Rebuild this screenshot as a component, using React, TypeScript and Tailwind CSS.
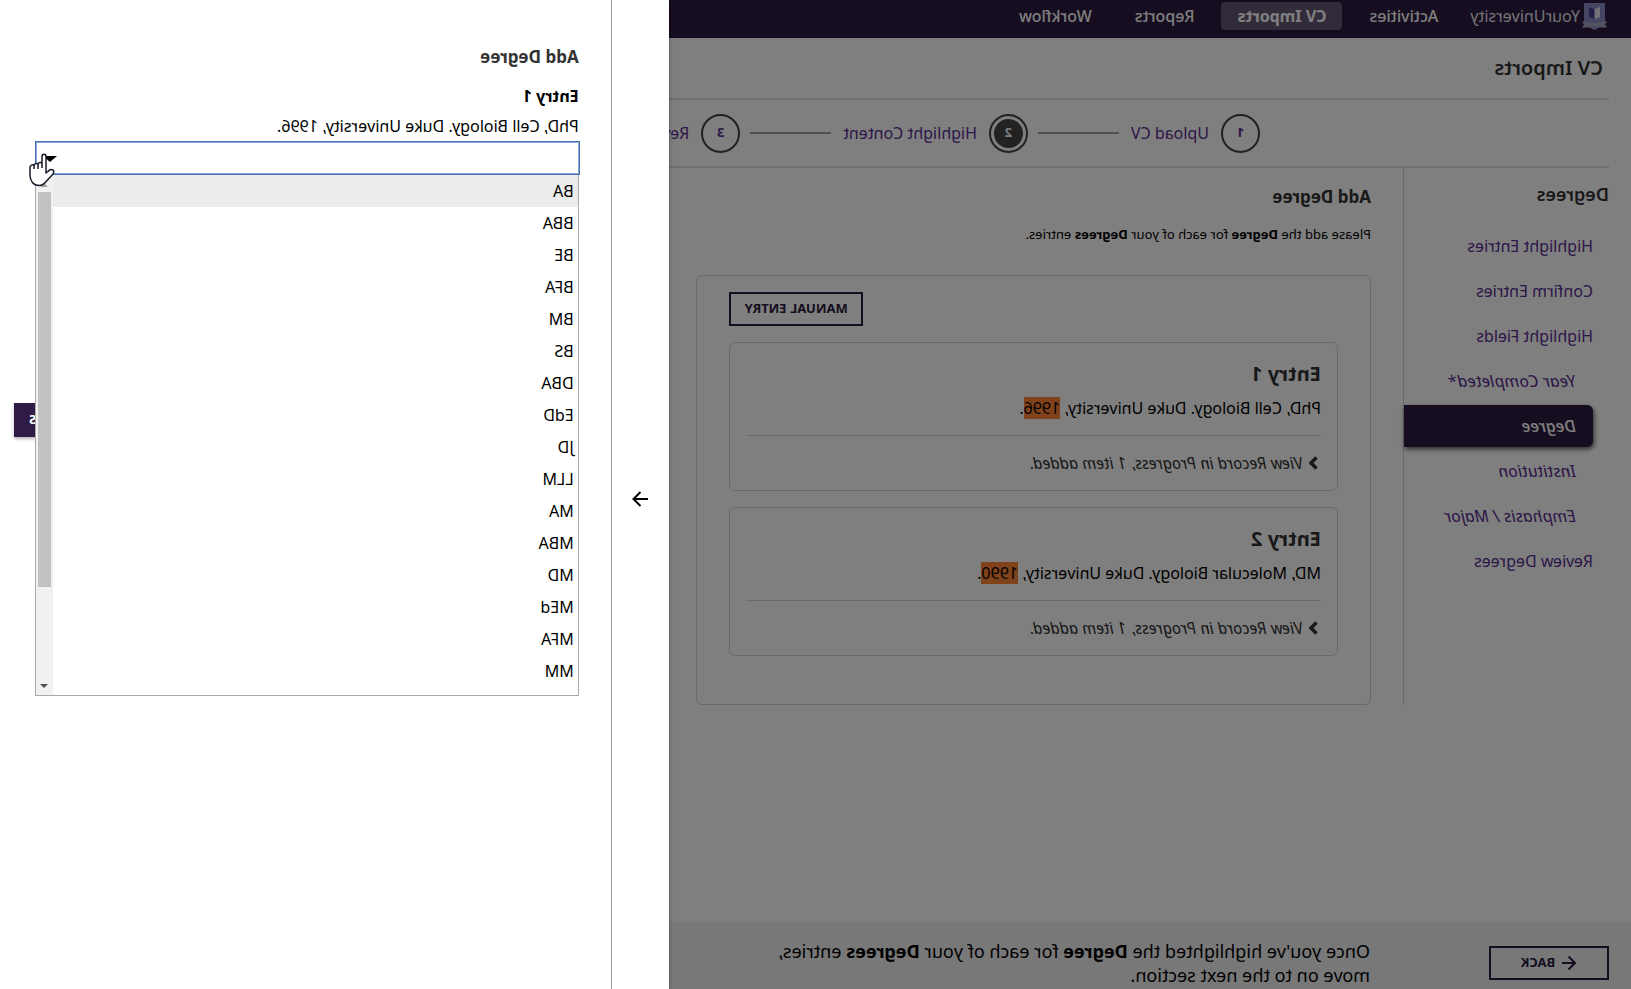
import React from 'react'
import clsx from 'clsx'

const navItems = ['Activities', 'CV Imports', 'Reports', 'Workflow']

const steps = ['Upload CV', 'Highlight Content', 'Review']

const sideItems = [
  { label: 'Highlight Entries' },
  { label: 'Confirm Entries' },
  { label: 'Highlight Fields' },
  { label: 'Year Completed*', sub: true },
  { label: 'Degree', sub: true, active: true },
  { label: 'Institution', sub: true },
  { label: 'Emphasis / Major', sub: true },
  { label: 'Review Degrees' },
]

const entries = [
  { title: 'Entry 1', text: 'PhD, Cell Biology. Duke University, ', year: '1996' },
  { title: 'Entry 2', text: 'MD, Molecular Biology. Duke University, ', year: '1990' },
]

const degrees = [
  'BA', 'BBA', 'BE', 'BFA', 'BM', 'BS', 'DBA', 'EdD',
  'JD', 'LLM', 'MA', 'MBA', 'MD', 'MEd', 'MFA', 'MM',
]

const Crest = () => (
  <svg width="25" height="28" viewBox="0 0 25 28" aria-hidden="true">
    <path d="M2 1h21v18c0 4-6 7-10.500 9C8 26 2 23 2 19z" fill="#8f8bc9" />
    <path d="M7 5l5 2v10l-5-2z" fill="#e6e6ee" />
    <path d="M18 5l-5 2v10l5-2z" fill="#4a4191" />
    <path d="M0 19.500h4l8.500 2 8.500-2h4l-2 3 2 3h-5l-7.500-1-7.500 1H0l2-3z" fill="#a9a6c0" />
  </svg>
)

const Arrow = ({ left = false, size = 16 }) => (
  <svg
    width={size}
    height={size}
    viewBox="0 0 16 16"
    fill="none"
    stroke="currentColor"
    strokeWidth="2"
    aria-hidden="true"
  >
    {left ? <path d="M15 8H2M8.500 1.500L2 8l6.500 6.500" /> : <path d="M0 8h14M7.500 1L14.500 8l-7 7" />}
  </svg>
)

const Header = () => (
  <header className="flex h-[38px] items-center bg-[#2c1a40] pb-1.5 pl-6 text-base text-white">
    <a href="#" className="flex items-center gap-0.5 text-[#e4e4ea]">
      <Crest />
      YourUniversity
    </a>
    <nav className="ml-4 flex gap-[11px]">
      {navItems.map((item) => (
        <a
          key={item}
          href="#"
          className={clsx(
            'rounded-sm px-4 leading-7',
            item === 'CV Imports' ? 'bg-[#655674] font-bold' : 'font-medium',
          )}
        >
          {item}
        </a>
      ))}
    </nav>
  </header>
)

const Stepper = () => (
  <ol className="flex h-[68px] items-center overflow-hidden border-b-2 border-[#dcdcdc] pl-[349px]">
    {steps.map((step, i) => (
      <li key={step} className="flex shrink-0 items-center">
        {i > 0 && <span className="mr-2.5 ml-3 h-0.5 w-[81px] bg-[#a0a0a0]" />}
        <span className="flex size-[39px] items-center justify-center rounded-full border-2 border-[#444] p-[3px]">
          <span
            className={clsx(
              'flex size-full items-center justify-center rounded-full text-[13px] font-bold',
              i === 1 ? 'bg-[#444] text-white' : 'text-[#5a2d91]',
            )}
          >
            {i + 1}
          </span>
        </span>
        <a href="#" className="ml-3 text-base text-[#5a2d91]">{step}</a>
      </li>
    ))}
  </ol>
)

const Sidebar = () => (
  <aside className="w-[206px] shrink-0 border-r border-[#d4d4d4] pt-3.5">
    <h2 className="mb-[19px] text-lg leading-6 font-semibold text-[#333]">Degrees</h2>
    <ul className="flex flex-col gap-[3px] pl-4">
      {sideItems.map(({ label, sub, active }) => (
        <li key={label}>
          <a
            href="#"
            className={clsx(
              'flex h-[42px] items-center',
              sub ? 'pl-[17px] text-[17px] italic' : 'text-base',
              active
                ? 'rounded-l-md bg-[#2c1a40] font-medium text-white shadow-[-1px_2px_5px_rgba(0,0,0,0.7)]'
                : 'text-[#5a2d91]',
            )}
          >
            {label}
          </a>
        </li>
      ))}
    </ul>
  </aside>
)

const EntryCard = ({ title, text, year }: { title: string; text: string; year: string }) => (
  <article className="rounded-md border border-[#d4d4d4] p-4">
    <h3 className="pt-px text-xl leading-7 font-bold text-[#333]">{title}</h3>
    <p className="mt-[9px] text-base leading-[22px]">
      {text}
      <mark className="bg-[#ff8534] text-black">{year}</mark>.
    </p>
    <div className="mt-4 border-t border-[#d4d4d4] pt-4">
      <button type="button" className="flex items-center gap-1.5 pl-[3px] text-base leading-[22px] text-[#333] italic">
        <svg width="9" height="14" viewBox="0 0 9 14" fill="none" stroke="#333" strokeWidth="3.500" aria-hidden="true">
          <path d="M1.500 1.500L7 7l-5.500 5.500" />
        </svg>
        View Record in Progress, 1 item added.
      </button>
    </div>
  </article>
)

const Footer = () => (
  <footer className="flex h-[66px] items-start bg-[#f0f0f0] pt-4 pl-[22px] shadow-[0_-1px_4px_rgba(0,0,0,0.06)]">
    <div className="w-[239px] shrink-0 pt-[7px]">
      <button
        type="button"
        className="flex h-[34px] w-[120px] items-center justify-center gap-1.5 border-2 border-[#2c1a40] text-[13px] font-bold text-[#2c1a40]"
      >
        <Arrow left />
        BACK
      </button>
    </div>
    <p className="max-w-[610px] text-lg leading-6">
      Once you've highlighted the <b>Degree</b> for each of your <b>Degrees</b> entries, move on to the
      next section.
    </p>
  </footer>
)

const Pointer = () => (
  <svg
    className="absolute top-3 -right-1.5 z-20"
    width="26"
    height="34"
    viewBox="0 0 26 34"
    fill="#fff"
    stroke="#1b1b2b"
    strokeWidth="1.500"
    strokeLinejoin="round"
    aria-hidden="true"
  >
    <path d="M9 18V3.500C9 .500 13 .500 13 3.500V10c1-1 3.500-.5 4 1 1-.8 3.500-.3 4 1 1.500-.7 4 0 4 2.500V22c0 6-3.500 10.500-9 10.500-4 0-5.500-2-7.500-4.500L2 21c-1-1.500-1-3.500 0-4 2-.8 4 0 5 1.500L9 20z" />
    <path d="M13 10v5M17 11v5M21 12v4" fill="none" />
  </svg>
)

const DegreeSelect = () => (
  <div className="relative mt-1">
    <select
      id="degree"
      defaultValue=""
      className="block h-[34px] w-full appearance-none border border-[#4a6ea9] bg-white px-1.5 inset-ring inset-ring-[#86a7e0] outline-none"
    >
      <option value="" />
      {degrees.map((d) => (
        <option key={d}>{d}</option>
      ))}
    </select>
    <span className="absolute top-[15px] right-2 border-x-[7px] border-t-[6px] border-x-transparent border-t-black" />
    <Pointer />
    <div className="absolute inset-x-0 top-full z-10 ml-px flex h-[521px] overflow-hidden border border-t-0 border-[#a9a9a9] bg-white">
      <ul role="listbox" aria-labelledby="degree" className="flex-1">
        {degrees.map((d, i) => (
          <li
            key={d}
            role="option"
            aria-selected={i === 0}
            className={clsx('px-1 text-base leading-8', i === 0 && 'bg-[#ececec]')}
          >
            {d}
          </li>
        ))}
      </ul>
      <div className="flex w-[17px] flex-col items-center bg-[#f1f1f1]">
        <span className="mt-2 border-x-4 border-b-4 border-x-transparent border-b-[#a3a3a3]" />
        <span className="mt-[5px] h-[395px] w-[13px] bg-[#c1c1c1]" />
        <span className="mt-auto mb-[7px] border-x-4 border-t-4 border-x-transparent border-t-[#505050]" />
      </div>
    </div>
  </div>
)

const Drawer = () => (
  <div className="absolute inset-y-0 right-0 flex w-[41%] bg-white shadow-[0_0_4px_rgba(0,0,0,0.4)]">
    <button
      type="button"
      aria-label="Close panel"
      className="flex w-[58px] shrink-0 items-center justify-center border-r border-[#999] pt-2"
    >
      <Arrow />
    </button>
    <section className="flex-1 pt-[45px] pr-[35px] pl-[31px]">
      <h2 className="pl-px text-[17px] leading-6 font-bold text-[#333]">Add Degree</h2>
      <label htmlFor="degree" className="mt-4 block pl-px text-base leading-[22px]">
        <b className="block">Entry 1</b>
        <span className="mt-2 block">PhD, Cell Biology. Duke University, 1996.</span>
      </label>
      <DegreeSelect />
      <div className="-mr-[21px] flex justify-end pt-[228px]">
        <button
          type="button"
          className="h-[34px] bg-[#2f1b45] px-[15px] text-[13px] font-bold text-white shadow-[0_2px_3px_rgba(0,0,0,0.3)]"
        >
          ADD DEGREES
        </button>
      </div>
    </section>
  </div>
)

const App = () => {
  return (
    <div className="relative min-h-screen -scale-x-100 overflow-hidden bg-white font-['Noto_Sans',sans-serif] text-black">
      <div className="flex min-h-screen flex-col">
        <Header />
        <div className="flex-1 px-[22px]">
          <h1 className="h-[62px] border-b-2 border-[#dcdcdc] pl-1.5 text-xl leading-[60px] font-semibold text-[#333]">
            CV Imports
          </h1>
          <Stepper />
          <div className="flex">
            <Sidebar />
            <main className="flex-1 pt-[17px] pl-8">
              <h2 className="text-[17px] leading-6 font-bold text-[#333]">Add Degree</h2>
              <p className="mt-[15px] text-[13px] leading-5">
                Please add the <b>Degree</b> for each of your <b>Degrees</b> entries.
              </p>
              <div className="mt-[31px] flex w-1/2 flex-col gap-4 rounded-md border border-[#d4d4d4] px-8 pt-4 pb-12">
                <button
                  type="button"
                  className="h-[34px] self-end border-2 border-[#2c1a40] px-[13px] text-[13px] font-bold text-[#2c1a40]"
                >
                  MANUAL ENTRY
                </button>
                {entries.map((entry) => (
                  <EntryCard key={entry.title} {...entry} />
                ))}
              </div>
            </main>
          </div>
        </div>
        <Footer />
      </div>
      <div className="absolute inset-0 bg-black/50" />
      <Drawer />
    </div>
  )
}

export default App
